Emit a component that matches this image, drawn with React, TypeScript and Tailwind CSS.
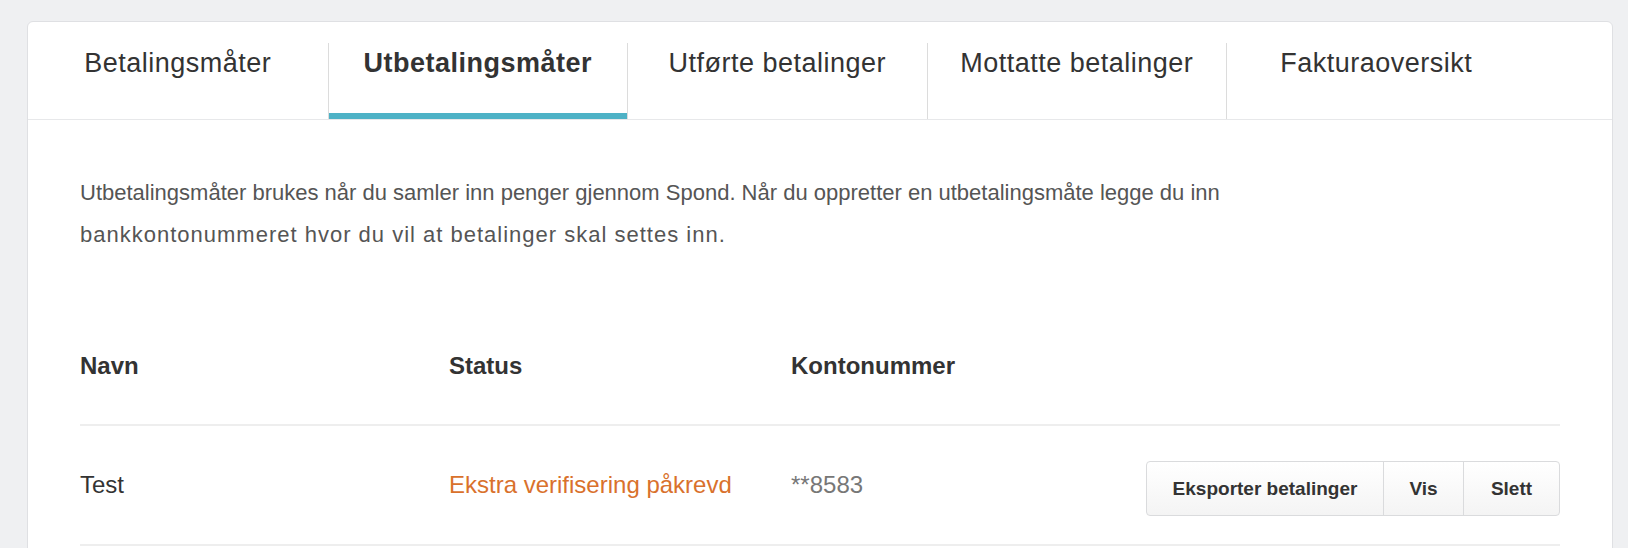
const tabs = [
  'Betalingsmåter',
  'Utbetalingsmåter',
  'Utførte betalinger',
  'Mottatte betalinger',
  'Fakturaoversikt',
];

function Tabs({ active }: { active: number }) {
  return (
    <div className="flex h-[98px] border-b border-[#e7e8ea]">
      {tabs.map((t, i) => (
        <div
          key={t}
          className={
            'relative mt-[21px] flex w-[299.5px] justify-center pt-[4px] text-[27px] leading-[32px] tracking-[0.5px] text-[#333] ' +
            (i > 0 ? 'border-l border-[#dcdcdc] ' : '') +
            (i === active ? 'font-bold' : '')
          }
        >
          {t}
          {i === active && <div className="absolute inset-x-0 bottom-0 h-[6px] bg-[#4eb2c6]" />}
        </div>
      ))}
    </div>
  );
}

function Actions() {
  const btn =
    'flex h-[55px] items-center justify-center border border-[#dadbdd] bg-gradient-to-b from-white to-[#f4f4f4] text-[19px] font-bold text-[#333]';
  return (
    <div className="mt-[7px] flex">
      <button className={btn + ' w-[238px] rounded-l-[4px]'}>Eksporter betalinger</button>
      <button className={btn + ' -ml-px w-[81px]'}>Vis</button>
      <button className={btn + ' -ml-px w-[97px] rounded-r-[4px]'}>Slett</button>
    </div>
  );
}

export default function App() {
  return (
    <div className="min-h-screen bg-[#eff0f2] pl-[27px] pt-[21px] font-['Liberation_Sans',Arial,sans-serif]">
      <div className="w-[1586px] rounded-[6px] border border-[#dfe0e3] bg-white pb-[80px]">
        <Tabs active={1} />

        <div className="px-[52px] pt-[52px]">
          <p className="text-[22px] leading-[42px] text-[#555]">
            Utbetalingsmåter brukes når du samler inn penger gjennom Spond. Når du oppretter en utbetalingsmåte legge du inn
            <br />
            <span className="tracking-[1px]">bankkontonummeret hvor du vil at betalinger skal settes inn.</span>
          </p>

          <div className="mt-[95px]">
            <div className="flex border-b-2 border-[#eeeeee] pb-[43px] text-[24px] font-bold leading-[30px] text-[#333]">
              <div className="w-[369px]">Navn</div>
              <div className="w-[342px]">Status</div>
              <div>Kontonummer</div>
            </div>
            <div className="flex h-[120px] items-center border-b-2 border-[#eeeeee] text-[24px] leading-[30px]">
              <div className="w-[369px] text-[#333]">Test</div>
              <div className="w-[342px] text-[#d9712c]">Ekstra verifisering påkrevd</div>
              <div className="flex-1 text-[#777]">**8583</div>
              <Actions />
            </div>
          </div>
        </div>
      </div>
    </div>
  );
}
